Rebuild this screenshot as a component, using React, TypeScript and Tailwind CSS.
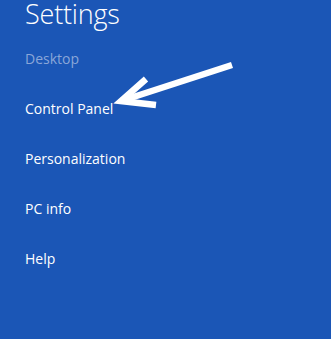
import React from "react";

const items = [
  { label: "Desktop", dim: true },
  { label: "Control Panel" },
  { label: "Personalization" },
  { label: "PC info" },
  { label: "Help" },
];

export default function App() {
  return (
    <div className="relative w-[331px] h-[339px] overflow-hidden bg-[#1b56b6] font-['Open_Sans','Noto_Sans',sans-serif] text-white">
      <div className="pl-[25px]">
        <h1 className="text-[27px] font-light leading-[28px] tracking-[-0.2px]">Settings</h1>
        <ul className="mt-[6px] flex flex-col">
          {items.map((it) => (
            <li
              key={it.label}
              className={`h-[50px] flex items-center text-[14px] leading-[20px] ${it.dim ? "text-[#8aa6d8]" : "text-white"}`}
            >
              {it.label}
            </li>
          ))}
        </ul>
      </div>

      {/* pointer arrow */}
      <svg className="absolute left-0 top-0" width="331" height="339" viewBox="0 0 331 339">
        <g stroke="#fff" strokeWidth="6.5" fill="none" strokeLinecap="butt" strokeLinejoin="miter">
          <line x1="232" y1="65" x2="121" y2="101" />
          <polyline points="146,79 121,101 156,105" />
        </g>
      </svg>
    </div>
  );
}
